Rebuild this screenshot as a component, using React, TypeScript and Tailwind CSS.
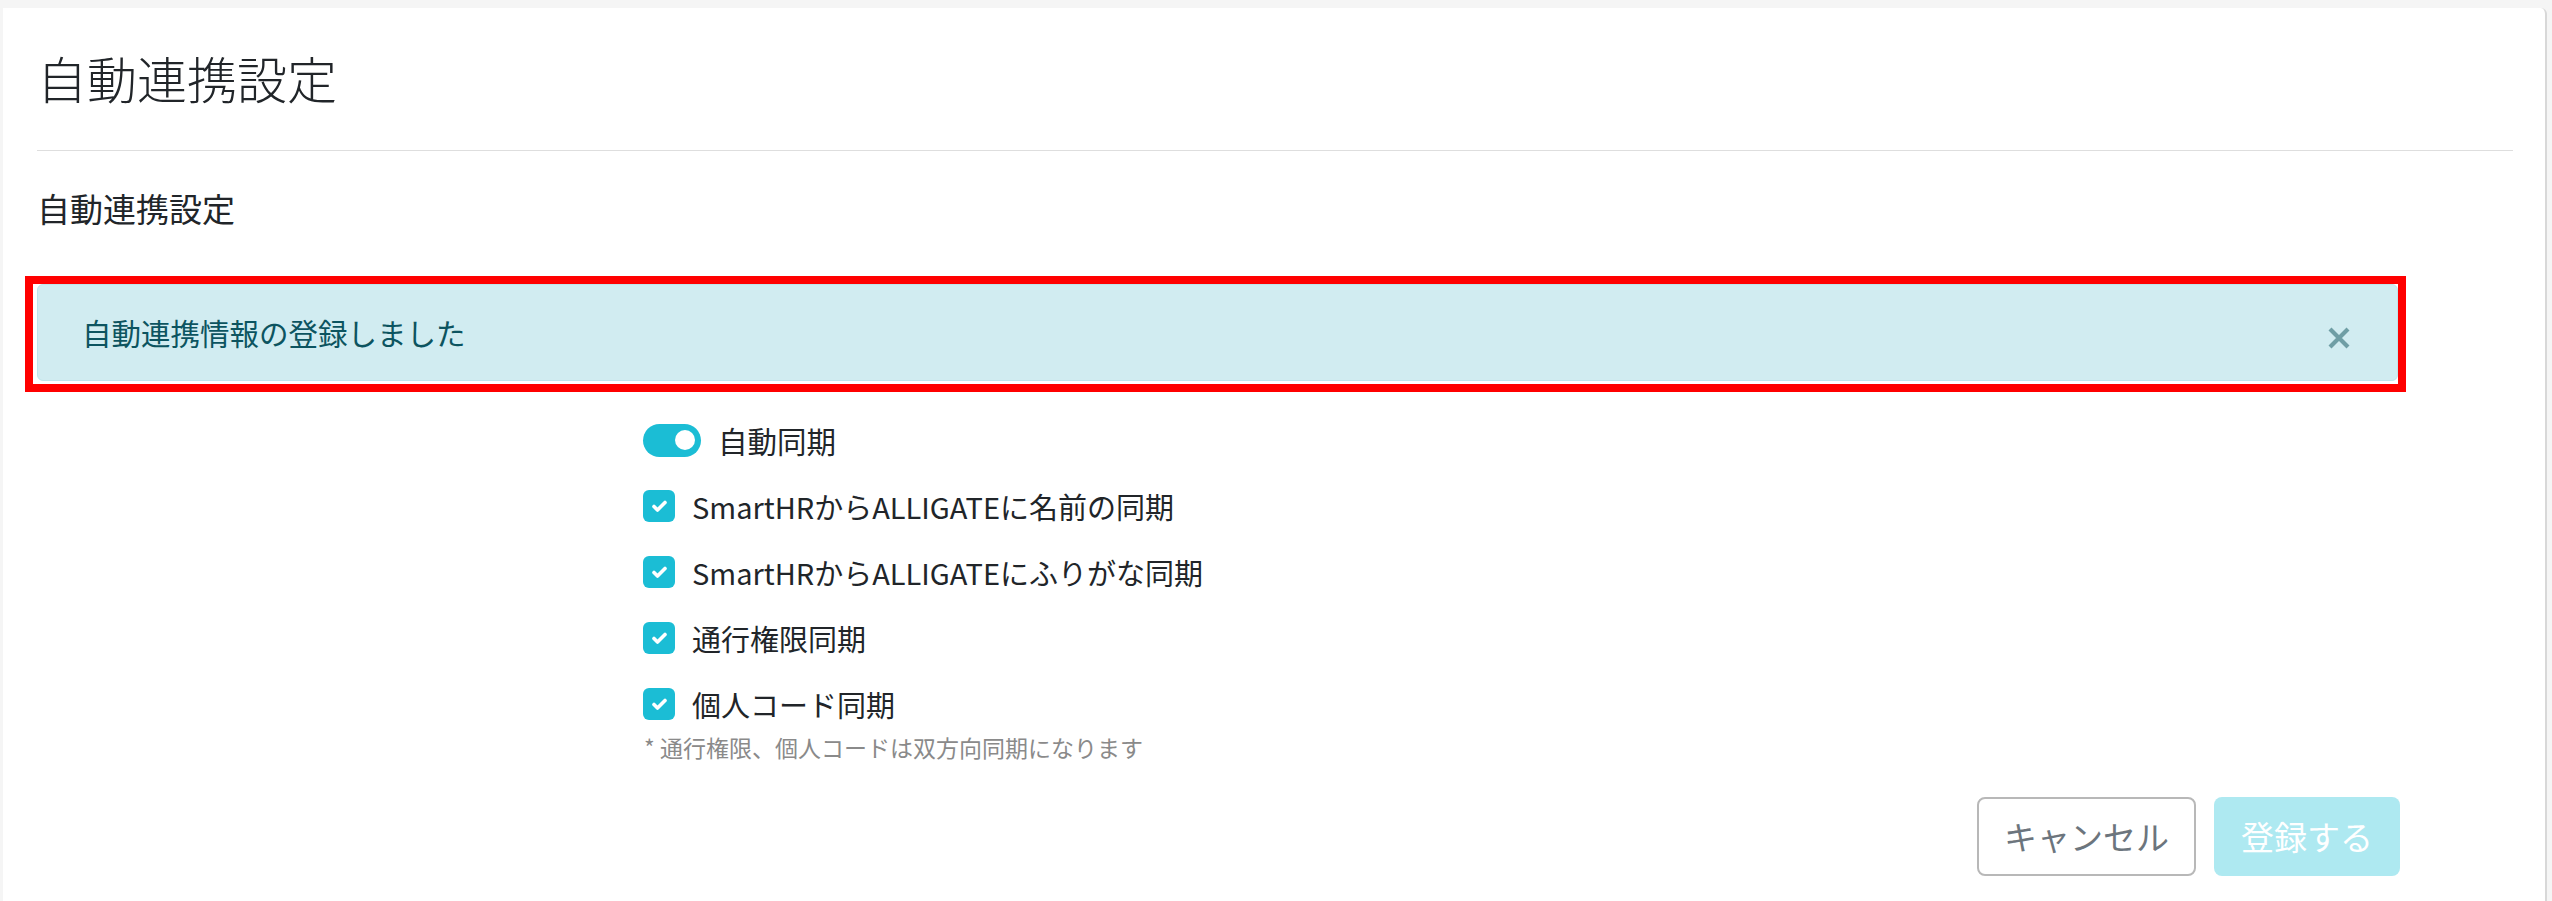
import { useState } from "react";

const SYNC_OPTIONS = [
  "SmartHRからALLIGATEに名前の同期",
  "SmartHRからALLIGATEにふりがな同期",
  "通行権限同期",
  "個人コード同期",
];

function Toggle({ on, onChange }: { on: boolean; onChange: () => void }) {
  return (
    <button
      type="button"
      onClick={onChange}
      className={`w-[58px] h-[33px] rounded-full flex items-center px-[6px] ${
        on ? "bg-[#1bbdd5] justify-end" : "bg-[#cfd6da] justify-start"
      }`}
    >
      <span className="block w-[20px] h-[20px] rounded-full bg-white" />
    </button>
  );
}

function Checkbox({ checked, onChange }: { checked: boolean; onChange: () => void }) {
  return (
    <button
      type="button"
      onClick={onChange}
      className={`w-[32px] h-[32px] rounded-[6px] flex items-center justify-center ${
        checked ? "bg-[#1bbdd5]" : "bg-white border-2 border-[#adb5bd]"
      }`}
    >
      {checked && (
        <svg width="15" height="12" viewBox="0 0 15 12" fill="none">
          <path d="M2 6.5L5.5 10L13 2.5" stroke="white" strokeWidth="3.6" strokeLinecap="round" strokeLinejoin="round" />
        </svg>
      )}
    </button>
  );
}

export default function App() {
  const [autoSync, setAutoSync] = useState(true);
  const [checked, setChecked] = useState<boolean[]>([true, true, true, true]);
  const [showAlert, setShowAlert] = useState(true);

  const toggle = (i: number) =>
    setChecked((prev) => prev.map((v, idx) => (idx === i ? !v : v)));

  return (
    <div className="min-h-[901px] bg-[#f5f5f5] pt-[8px] pl-[3px] pr-[5px] font-['Noto_Sans_CJK_JP',sans-serif] text-[#212529]">
      <div className="bg-white rounded-tr-[6px] border-r-2 border-[#d8d8d8] pl-[34px] pr-[32px] pb-[40px]">
        {/* Page header */}
        <div className="pt-[39px] pb-[43px] border-b border-[#dedede]">
          <h1 className="text-[50px] leading-[60px] font-light">自動連携設定</h1>
        </div>

        <h2 className="mt-[37px] text-[33px] leading-[40px] font-normal">自動連携設定</h2>

        <div className="w-[2361px] mt-[48px]">
          {/* Notice */}
          {showAlert && (
            <div className="-ml-[12px] w-[2381px] border-[8px] border-[#ff0000] pl-[4px] pb-[3px]">
              <div className="h-[97px] bg-[#d1ecf1] border border-[#bee5eb] rounded-[6px] flex items-center justify-between pl-[44px] pr-[46px]">
                <span className="text-[29.5px] leading-[40px] text-[#0c5460] -mt-[2px]">
                  自動連携情報の登録しました
                </span>
                <button type="button" onClick={() => setShowAlert(false)} className="mt-[10px]">
                  <svg width="24" height="22" viewBox="0 0 24 22">
                    <path d="M3 2L21 20M21 2L3 20" stroke="#6f9ea5" strokeWidth="4.2" />
                  </svg>
                </button>
              </div>
            </div>
          )}

          {/* Sync settings */}
          <div className="pl-[606px] mt-[32px]">
            <div className="flex flex-col gap-[34px]">
              <div className="h-[32px] flex items-center">
                <Toggle on={autoSync} onChange={() => setAutoSync(!autoSync)} />
                <span className="ml-[17px] text-[29.5px] leading-[40px]">自動同期</span>
              </div>
              {SYNC_OPTIONS.map((label, i) => (
                <div key={label} className="h-[32px] flex items-center">
                  <Checkbox checked={checked[i]} onChange={() => toggle(i)} />
                  <span className="ml-[17px] text-[29px] leading-[40px]">{label}</span>
                </div>
              ))}
            </div>
            <p className="mt-[12px] ml-[1px] text-[23px] leading-[30px] text-[#8a8a8a]">
              * 通行権限、個人コードは双方向同期になります
            </p>
          </div>

          {/* Actions */}
          <div className="mt-[35px] flex justify-end gap-[18px] -mr-[2px]">
            <button
              type="button"
              className="h-[79px] px-[25px] border-2 border-[#b8b8b8] rounded-[8px] bg-white text-[33px] text-[#6c757d]"
            >
              キャンセル
            </button>
            <button
              type="button"
              disabled
              className="h-[79px] px-[25px] border-2 border-transparent rounded-[8px] bg-[#aee9f1] text-[33px] text-white"
            >
              登録する
            </button>
          </div>
        </div>
      </div>
    </div>
  );
}
